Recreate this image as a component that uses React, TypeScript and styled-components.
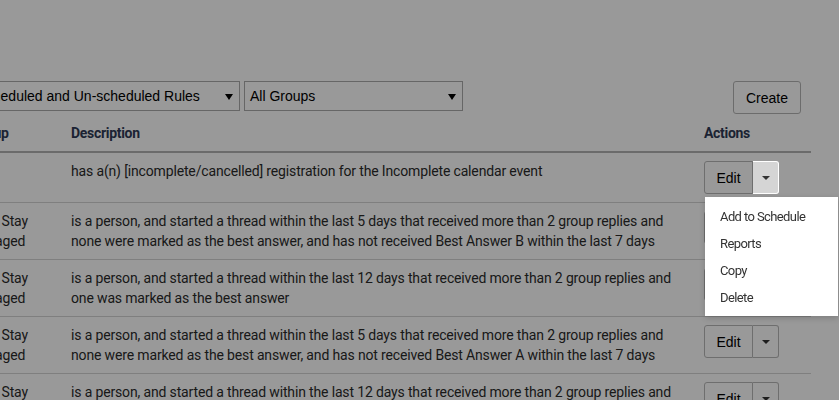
import styled, { createGlobalStyle } from 'styled-components'

const GlobalStyle = createGlobalStyle`
  html, body {
    margin: 0;
    padding: 0;
    background: #fff;
    overflow: hidden;
  }
  body {
    font-family: Roboto, 'Liberation Sans', sans-serif;
    color: #333;
  }
`

type Rule = {
  group: string[]
  description: string
}

const rules: Rule[] = [
  {
    group: [],
    description:
      'has a(n) [incomplete/cancelled] registration for the Incomplete calendar event',
  },
  {
    group: ['Lets Stay', 'Engaged'],
    description:
      'is a person, and started a thread within the last 5 days that received more than 2 group replies and none were marked as the best answer, and has not received Best Answer B within the last 7 days',
  },
  {
    group: ['Lets Stay', 'Engaged'],
    description:
      'is a person, and started a thread within the last 12 days that received more than 2 group replies and one was marked as the best answer',
  },
  {
    group: ['Lets Stay', 'Engaged'],
    description:
      'is a person, and started a thread within the last 5 days that received more than 2 group replies and none were marked as the best answer, and has not received Best Answer A within the last 7 days',
  },
  {
    group: ['Lets Stay', 'Engaged'],
    description:
      'is a person, and started a thread within the last 12 days that received more than 2 group replies and one was marked as the best answer',
  },
]

const menuItems = ['Add to Schedule', 'Reports', 'Copy', 'Delete']

const App = () => {
  return (
    <>
      <GlobalStyle />
      <Page>
        <Toolbar>
          <SelectBox $width={289}>
            All Scheduled and Un-scheduled Rules
            <SelectCaret />
          </SelectBox>
          <SelectBox $width={219}>
            All Groups
            <SelectCaret />
          </SelectBox>
          <CreateButton type="button">Create</CreateButton>
        </Toolbar>
        <Table>
          <colgroup>
            <col style={{ width: 99 }} />
            <col style={{ width: 633 }} />
            <col style={{ width: 115 }} />
          </colgroup>
          <thead>
            <tr>
              <Th>Group</Th>
              <Th>Description</Th>
              <Th>Actions</Th>
            </tr>
          </thead>
          <tbody>
            {rules.map((rule, i) => (
              <tr key={i}>
                <Td>
                  {rule.group.map((line) => (
                    <GroupLine key={line}>{line}</GroupLine>
                  ))}
                </Td>
                <Td>{rule.description}</Td>
                <Td>
                  <ButtonGroup>
                    <EditButton type="button">Edit</EditButton>
                    <Toggle type="button" $open={i === 0}>
                      <Caret />
                    </Toggle>
                    {i === 0 && (
                      <Menu>
                        {menuItems.map((item) => (
                          <MenuItem key={item}>{item}</MenuItem>
                        ))}
                      </Menu>
                    )}
                  </ButtonGroup>
                </Td>
              </tr>
            ))}
          </tbody>
        </Table>
      </Page>
      <Overlay />
    </>
  )
}

export default App

const Page = styled.div`
  margin-left: -49px;
  width: 860px;
  padding-top: 81px;
`

const Toolbar = styled.div`
  display: flex;
  align-items: flex-start;
  gap: 4px;
`

const SelectBox = styled.div<{ $width: number }>`
  position: relative;
  box-sizing: border-box;
  width: ${(p) => p.$width}px;
  height: 30px;
  padding: 0 20px 0 5px;
  border: 1px solid #aaa;
  background: #fff;
  font-family: 'Liberation Sans', Arial, sans-serif;
  font-size: 14px;
  line-height: 28px;
  color: #000;
  white-space: nowrap;
  overflow: hidden;
`

const SelectCaret = styled.span`
  position: absolute;
  right: 6px;
  top: 12px;
  border-left: 4px solid transparent;
  border-right: 4px solid transparent;
  border-top: 6px solid #000;
`

const CreateButton = styled.button`
  margin-left: auto;
  margin-right: 10px;
  height: 33px;
  padding: 0 12px;
  border: 1px solid #b5b5b5;
  border-radius: 3px;
  background: #fff;
  font-family: 'Liberation Sans', Arial, sans-serif;
  font-size: 14px;
  color: #000;
`

const Table = styled.table`
  margin-left: 13px;
  margin-top: 1px;
  width: 847px;
  table-layout: fixed;
  border-collapse: collapse;
`

const Th = styled.th`
  padding: 8px;
  text-align: left;
  font-size: 14px;
  font-weight: 700;
  line-height: 20px;
  letter-spacing: -0.3px;
  color: #2f3a55;
  border-bottom: 2px solid #b3b3b3;
`

const Td = styled.td`
  padding: 8px;
  vertical-align: top;
  font-size: 14px;
  line-height: 20px;
  letter-spacing: -0.15px;
  color: #2b2b2b;
  border-bottom: 1px solid #d4d4d4;
`

const GroupLine = styled.div``

const ButtonGroup = styled.div`
  position: relative;
  display: inline-flex;
`

const EditButton = styled.button`
  width: 49px;
  height: 33px;
  border: 1px solid #b8b8b8;
  border-radius: 3px 0 0 3px;
  background: #fff;
  font-family: 'Liberation Sans', Arial, sans-serif;
  font-size: 14px;
  color: #000;
  padding: 0;
`

const Toggle = styled.button<{ $open: boolean }>`
  position: relative;
  z-index: ${(p) => (p.$open ? 20 : 'auto')};
  display: flex;
  align-items: center;
  justify-content: center;
  width: 26px;
  height: 33px;
  padding: 0;
  border: 1px solid ${(p) => (p.$open ? '#fff' : '#b8b8b8')};
  border-left: none;
  border-radius: 0 3px 3px 0;
  background: ${(p) => (p.$open ? '#d5d5d5' : '#fff')};
`

const Caret = styled.span`
  border-left: 4px solid transparent;
  border-right: 4px solid transparent;
  border-top: 4px solid #333;
`

const Menu = styled.div`
  position: absolute;
  z-index: 20;
  top: calc(100% + 3px);
  left: 1px;
  width: 133px;
  padding: 6px 0 5px;
  background: #fff;
  box-shadow: 0 2px 6px rgba(0, 0, 0, 0.18);
`

const MenuItem = styled.div`
  padding: 6px 15px;
  font-size: 13px;
  line-height: 15px;
  letter-spacing: -0.6px;
  color: #333;
  white-space: nowrap;
`

const Overlay = styled.div`
  position: fixed;
  inset: 0;
  z-index: 10;
  background: rgba(0, 0, 0, 0.4);
`
